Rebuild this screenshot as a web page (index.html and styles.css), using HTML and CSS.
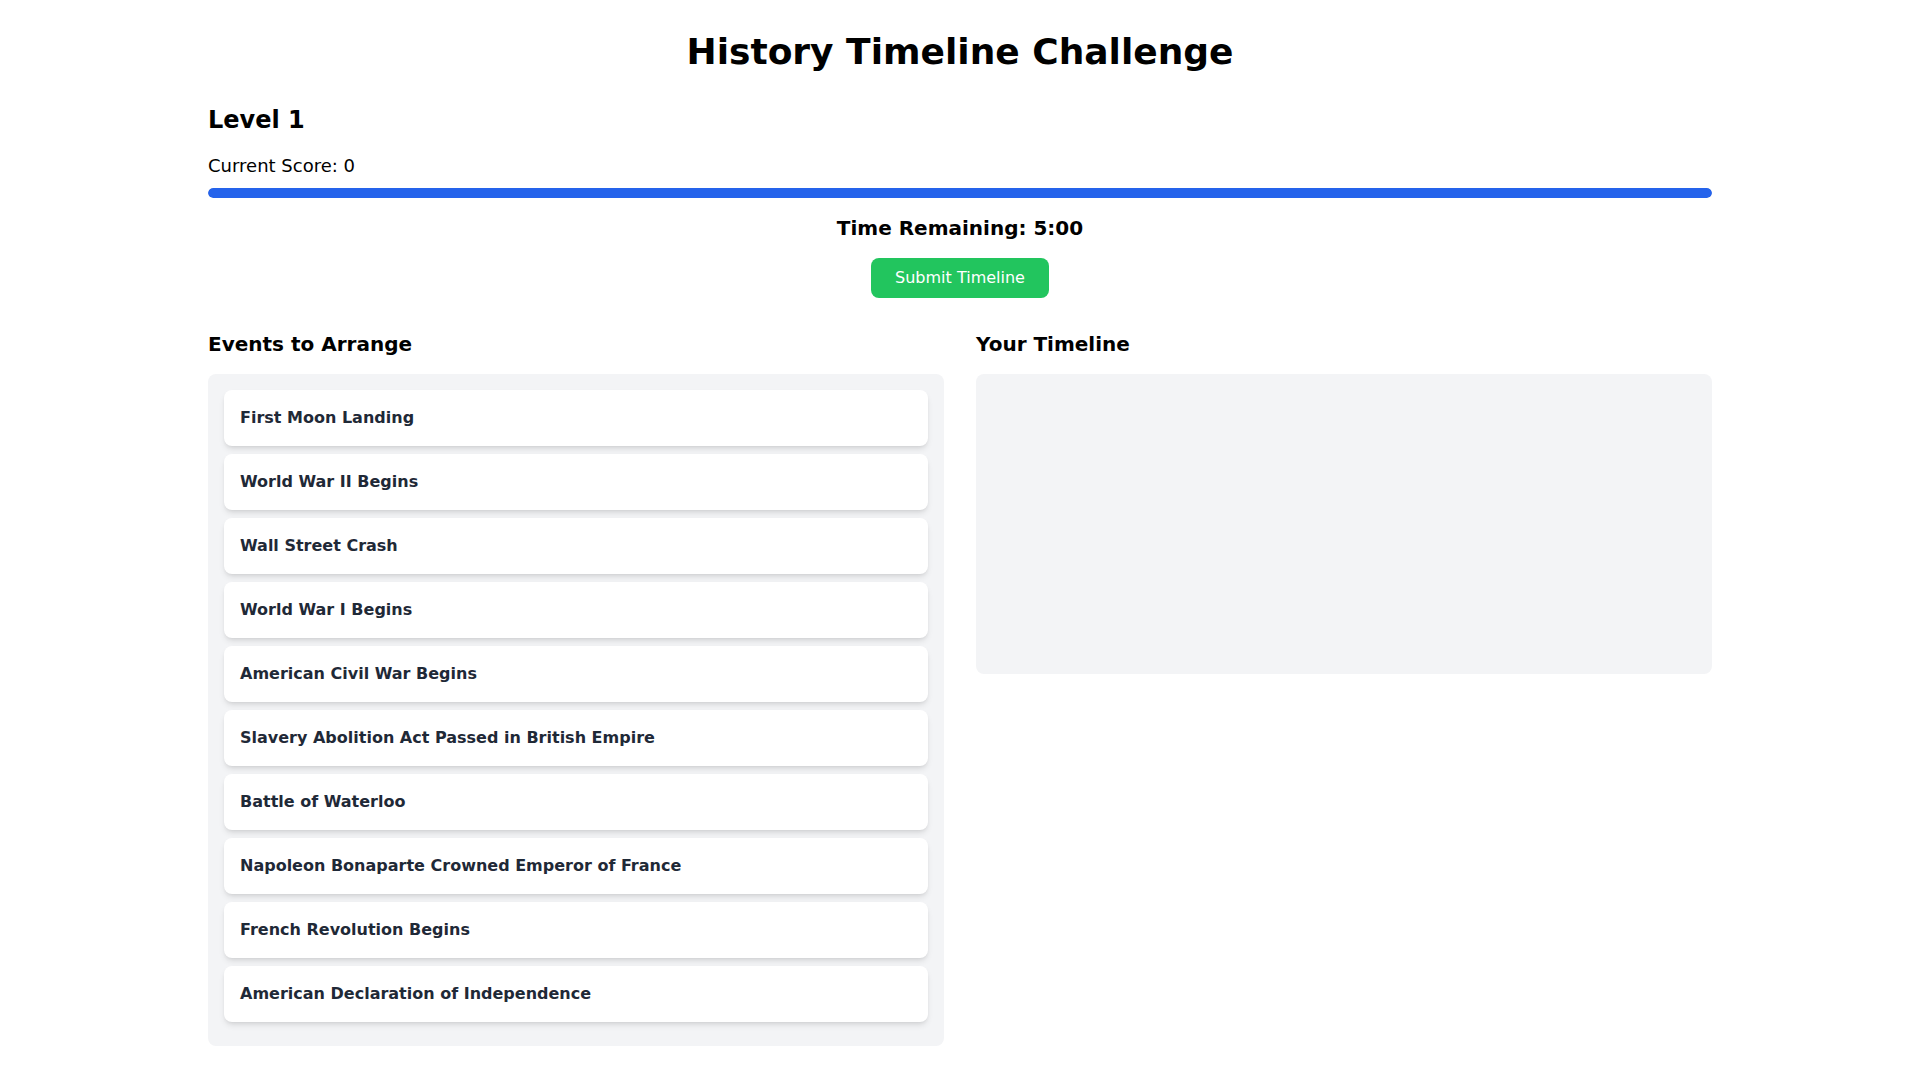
FILE: index.html
```html
<!DOCTYPE html>
<html lang="en">
<head>
<meta charset="utf-8">
<title>History Timeline Challenge</title>
<link rel="stylesheet" href="styles.css">
</head>
<body>
<div class="container">
  <h1 class="title">History Timeline Challenge</h1>
  <h2 class="level">Level 1</h2>
  <p class="score">Current Score: 0</p>
  <div class="progress"><div class="progress-fill" style="width:100%"></div></div>
  <p class="timer">Time Remaining: 5:00</p>
  <div class="actions"><button class="submit">Submit Timeline</button></div>
  <div class="columns">
    <section>
      <h3 class="col-title">Events to Arrange</h3>
      <div class="panel">
        <div class="card">First Moon Landing</div>
        <div class="card">World War II Begins</div>
        <div class="card">Wall Street Crash</div>
        <div class="card">World War I Begins</div>
        <div class="card">American Civil War Begins</div>
        <div class="card">Slavery Abolition Act Passed in British Empire</div>
        <div class="card">Battle of Waterloo</div>
        <div class="card">Napoleon Bonaparte Crowned Emperor of France</div>
        <div class="card">French Revolution Begins</div>
        <div class="card">American Declaration of Independence</div>
      </div>
    </section>
    <section>
      <h3 class="col-title">Your Timeline</h3>
      <div class="panel timeline"></div>
    </section>
  </div>
</div>
</body>
</html>
```
FILE: styles.css
```css
* { box-sizing: border-box; }
html, body { margin: 0; padding: 0; background: #ffffff; }
body {
  font-family: "DejaVu Sans", sans-serif;
  color: #000;
  font-size: 16px;
  line-height: 24px;
}
.container {
  max-width: 1536px;
  margin: 0 auto;
  padding: 32px 16px;
}
.title {
  margin: 0 0 32px;
  font-size: 36px;
  line-height: 40px;
  font-weight: 700;
  text-align: center;
}
.level {
  margin: 0 0 16px;
  font-size: 24px;
  line-height: 32px;
  font-weight: 700;
}
.score {
  margin: 0 0 8px;
  font-size: 18px;
  line-height: 28px;
}
.progress {
  height: 10px;
  background: #e5e7eb;
  border-radius: 9999px;
  overflow: hidden;
  margin-bottom: 16px;
}
.progress-fill {
  height: 100%;
  background: #2563eb;
  border-radius: 9999px;
}
.timer {
  margin: 0 0 16px;
  text-align: center;
  font-size: 20px;
  line-height: 28px;
  font-weight: 700;
}
.actions {
  display: flex;
  justify-content: center;
  margin-bottom: 32px;
}
.submit {
  font-family: "DejaVu Sans", sans-serif;
  font-size: 16px;
  line-height: 24px;
  color: #ffffff;
  background: #22c55e;
  border: none;
  border-radius: 8px;
  padding: 8px 24px;
  cursor: pointer;
}
.columns {
  display: grid;
  grid-template-columns: 1fr 1fr;
  gap: 32px;
  align-items: start;
}
.col-title {
  margin: 0 0 16px;
  font-size: 20px;
  line-height: 28px;
  font-weight: 700;
}
.panel {
  background: #f3f4f6;
  border-radius: 8px;
  padding: 16px;
}
.timeline { min-height: 300px; }
.card {
  background: #ffffff;
  border-radius: 8px;
  padding: 16px;
  margin-bottom: 8px;
  box-shadow: 0 4px 6px -1px rgba(0,0,0,0.1), 0 2px 4px -2px rgba(0,0,0,0.1);
  font-weight: 700;
  color: #1f2937;
  font-size: 16px;
  line-height: 24px;
}
```
